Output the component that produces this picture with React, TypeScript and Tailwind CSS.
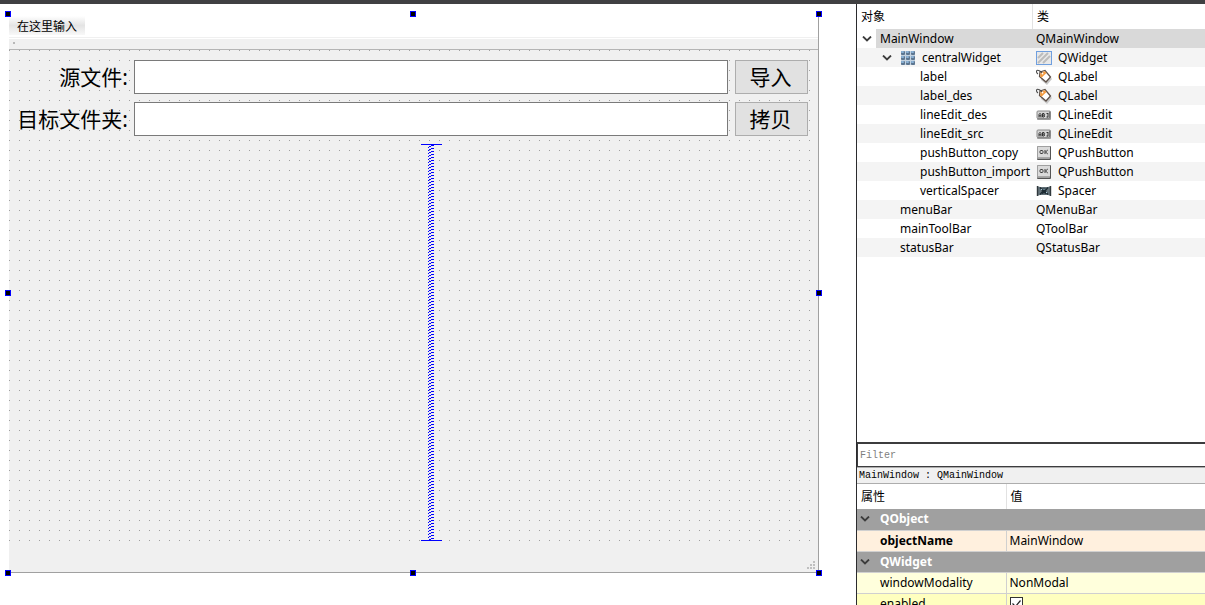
import type { ReactNode } from 'react';
import clsx from 'clsx';

const UI_FONT = "font-['Noto_Sans','Noto_Sans_CJK_SC',sans-serif]";
const MONO_FONT = "font-['Liberation_Mono','Noto_Sans_CJK_SC',monospace]";

type IconName = 'widget' | 'label' | 'lineEdit' | 'button' | 'spacer';

type TreeRow = {
  name: string;
  cls: string;
  depth: 0 | 1 | 2;
  icon?: IconName;
  expanded?: boolean;
  layout?: boolean;
};

const treeRows: TreeRow[] = [
  { name: 'MainWindow', cls: 'QMainWindow', depth: 0, expanded: true },
  { name: 'centralWidget', cls: 'QWidget', depth: 1, icon: 'widget', expanded: true, layout: true },
  { name: 'label', cls: 'QLabel', depth: 2, icon: 'label' },
  { name: 'label_des', cls: 'QLabel', depth: 2, icon: 'label' },
  { name: 'lineEdit_des', cls: 'QLineEdit', depth: 2, icon: 'lineEdit' },
  { name: 'lineEdit_src', cls: 'QLineEdit', depth: 2, icon: 'lineEdit' },
  { name: 'pushButton_copy', cls: 'QPushButton', depth: 2, icon: 'button' },
  { name: 'pushButton_import', cls: 'QPushButton', depth: 2, icon: 'button' },
  { name: 'verticalSpacer', cls: 'Spacer', depth: 2, icon: 'spacer' },
  { name: 'menuBar', cls: 'QMenuBar', depth: 1 },
  { name: 'mainToolBar', cls: 'QToolBar', depth: 1 },
  { name: 'statusBar', cls: 'QStatusBar', depth: 1 },
];

function Chevron() {
  return (
    <svg width="10" height="6" viewBox="0 0 10 6" fill="none" className="shrink-0">
      <path d="M1 0.500l4 4 4-4" stroke="#3c3c3c" strokeWidth="1.8" />
    </svg>
  );
}

function GridIcon() {
  return (
    <svg width="16" height="16" viewBox="0 0 16 16" className="shrink-0">
      <rect x="1" y="1" width="14" height="14" fill="#c3d2e0" />
      {[1, 6, 11].map((y) =>
        [1, 6, 11].map((x) => (
          <g key={`${x}-${y}`}>
            <rect x={x} y={y} width="4" height="4" rx="1" fill="#5d7690" />
            <rect x={x} y={y} width="3" height="2" rx="1" fill="#8db4d8" />
          </g>
        ))
      )}
    </svg>
  );
}

function ClassIcon({ name }: { name: IconName }) {
  return (
    <svg width="16" height="16" viewBox="0 0 16 16" className="shrink-0">
      {name === 'widget' && (
        <>
          <rect x="0.5" y="1.5" width="15" height="13" fill="#e8e8e8" stroke="#6f9fdf" />
          <path d="M2 8l5-5M2 13L12 3M7 13l7-7" stroke="#bcbcbc" strokeWidth="2" />
        </>
      )}
      {name === 'label' && (
        <>
          <path d="M6 4h5l5 6-5 6-6-5z" fill="#c8c8c8" />
          <path d="M4 3l5-1.500 5.500 6.500-4.500 5L3.500 7.500z" fill="#fff" stroke="#5e5048" strokeWidth="1.300" />
          <path d="M4.500 3.500L9 2.200 10.500 4 5.500 8.800 4 7.300z" fill="#f39a3e" />
          <circle cx="6.500" cy="4.500" r="0.900" fill="#fff" />
          <path d="M6 4C4.500 2 2 0.800 1 1.500S0.500 4 2 5" fill="none" stroke="#4c4c4c" strokeWidth="1.100" />
        </>
      )}
      {name === 'lineEdit' && (
        <>
          <rect x="1" y="5" width="14" height="8" rx="1" fill="#9a9a9a" />
          <rect x="1" y="4" width="13.500" height="7.500" rx="1" fill="#d4d4d4" stroke="#8a8a8a" />
          <path
            d="M3 10.500V7.500l1-1.200 1 1.200v3M3 8.800h2M6.500 10V6.500H8l.6.700-.6.900H6.500M8 8.100l.7.900-.7 1H6.500M12 6v4.500M10.500 10h1.500M10.500 6.500h1.500"
            fill="none"
            stroke="#333"
            strokeWidth="1"
          />
          <path d="M13.500 4.500v6.500" stroke="#777" />
        </>
      )}
      {name === 'button' && (
        <>
          <rect x="1" y="1" width="14" height="14" rx="1" fill="#555" />
          <rect x="1" y="1" width="13" height="12.500" rx="1" fill="#dadada" />
          <path d="M1 12h13v1.500H1z" fill="#a8a8a8" />
          <path d="M1.500 13V1.500H14" fill="none" stroke="#a0a0a0" />
          <rect x="4" y="5.500" width="3" height="3" rx="1" fill="none" stroke="#3c3c3c" />
          <path d="M9 5v4M11.800 5L9.500 7l2.300 2" fill="none" stroke="#3c3c3c" />
        </>
      )}
      {name === 'spacer' && (
        <>
          <path d="M1 3l3 1h8l3-1v10l-3-1H4l-3 1z" fill="#66747b" />
          <path d="M1.500 3v10M14.500 3v10" stroke="#30383c" strokeWidth="1.400" />
          <path d="M4 4.500L7 8l-3 3.500M12 4.500L9 8l3 3.500M7 5l2.500 6M9 5l-2.500 6" fill="none" stroke="#1d2b33" strokeWidth="1.300" />
          <path d="M5 6l1 1M11 9l-1 1M8 5.500v1.500" stroke="#a9cbdc" />
        </>
      )}
    </svg>
  );
}

/* Selection handle on the edge of the form */
function Handle({ className }: { className: string }) {
  return <span className={clsx('absolute size-1.5 border border-[#0000ff] bg-black', className)} />;
}

function VerticalSpacer() {
  return (
    <div className="mr-[7px] flex w-[21px] flex-col items-center justify-self-center border-y border-[#0000ff]">
      <svg width="7" height="100%" className="min-h-0 flex-1">
        <defs>
          <pattern id="hatch" width="7" height="3" patternUnits="userSpaceOnUse">
            <path d="M3 0h3v1H3zM1 1h2v1H1zM0 2h1v1H0z" fill="#0000ff" shapeRendering="crispEdges" />
          </pattern>
        </defs>
        <rect width="7" height="100%" fill="url(#hatch)" />
      </svg>
    </div>
  );
}

function FormRow({ id, label, button }: { id: string; label: string; button: string }) {
  return (
    <>
      <label htmlFor={id} className="self-center justify-self-end pr-1.5 whitespace-nowrap">
        {label}
      </label>
      <input id={id} type="text" className="mr-[7px] h-[34px] min-w-0 border border-[#7a7a7a] bg-white px-1 outline-none" />
      <button type="button" className="h-[34px] border border-[#adadad] bg-[#e1e1e1] pr-0.5">
        {button}
      </button>
    </>
  );
}

function FormCanvas() {
  return (
    <main className="min-w-0 flex-1 pt-[10px] pr-[37px] pb-8 pl-[9px]">
      <div className="relative flex h-full flex-col border-r border-b border-[#a0a0a0] bg-[#f0f0f0]">
        <div className="h-6 border-b border-[#f0f0f0] bg-white pt-0.5">
          <button type="button" className="block h-[19px] bg-linear-to-b from-white via-[#e4e4e4] to-[#f8f8f8] px-2 text-xs leading-[21px]">
            在这里输入
          </button>
        </div>
        <div className="h-3 border-t border-b border-t-white border-b-[#b4b4b4] pt-[3px] pl-1">
          <div className="size-0.5 bg-[#b8b8b8]" />
        </div>
        <div className="grid min-h-0 flex-1 grid-cols-[115px_1fr_73px] grid-rows-[34px_34px_1fr] gap-y-2 bg-[conic-gradient(at_1px_1px,transparent_270deg,#a0a0a0_270deg)] bg-[length:10px_10px] pt-[10px] pr-[10px] pb-[9px] pl-[10px] text-[21px] leading-none">
          <FormRow id="lineEdit_src" label="源文件:" button="导入" />
          <FormRow id="lineEdit_des" label="目标文件夹:" button="拷贝" />
          <div />
          <VerticalSpacer />
        </div>
        <div className="flex h-[22px] shrink-0 items-end justify-end p-0.5">
          <svg width="9" height="9" viewBox="0 0 9 9" className="text-[#bfbfbf]">
            <path d="M6 0h2v2H6zM3 3h2v2H3zM6 3h2v2H6zM0 6h2v2H0zM3 6h2v2H3zM6 6h2v2H6z" fill="currentColor" />
          </svg>
        </div>

        <Handle className="-top-[3px] -left-1" />
        <Handle className="-top-[3px] left-1/2 -ml-1" />
        <Handle className="-top-[3px] -right-1" />
        <Handle className="top-1/2 -left-1 -mt-[3px]" />
        <Handle className="top-1/2 -right-1 -mt-[3px]" />
        <Handle className="-bottom-1 -left-1" />
        <Handle className="-bottom-1 left-1/2 -ml-1" />
        <Handle className="-right-1 -bottom-1" />
      </div>
    </main>
  );
}

function ObjectTree() {
  return (
    <div className="min-h-0 flex-1 overflow-hidden bg-white">
      <table className="w-full table-fixed border-collapse text-left">
        <colgroup>
          <col className="w-[176px]" />
          <col />
        </colgroup>
        <thead>
          <tr className="h-[25px]">
            <th className="p-0 pl-1 font-normal">对象</th>
            <th className="p-0 font-normal">
              <div className="-ml-px flex h-[25px] items-center border-l border-[#e2e2e2] pl-1">类</div>
            </th>
          </tr>
        </thead>
        <tbody>
          {treeRows.map((row, i) => (
            <tr key={row.name} className={i % 2 ? 'bg-[#f4f4f4]' : 'bg-white'}>
              <td className="p-0">
                <div className={clsx('flex h-[19px] items-center', row.depth === 1 && row.expanded && 'pl-5')}>
                  {row.expanded && (
                    <span className="flex w-5 shrink-0 justify-center pr-px">
                      <Chevron />
                    </span>
                  )}
                  <span
                    className={clsx(
                      'flex h-full flex-1 items-center gap-1.5 whitespace-nowrap',
                      row.depth === 0 && '-ml-px bg-[#d9d9d9] pl-1',
                      row.depth === 1 && row.expanded && 'pl-[3px]',
                      row.depth === 1 && !row.expanded && 'pl-[43px]',
                      row.depth === 2 && 'pl-[63px]'
                    )}
                  >
                    {row.layout && <GridIcon />}
                    {row.name}
                  </span>
                </div>
              </td>
              <td className={clsx('p-0', row.depth === 0 && 'bg-[#d9d9d9]')}>
                <div className="flex h-[19px] items-center gap-1.5 pl-[3px]">
                  {row.icon && <ClassIcon name={row.icon} />}
                  {row.cls}
                </div>
              </td>
            </tr>
          ))}
        </tbody>
      </table>
    </div>
  );
}

function GroupRow({ children }: { children: ReactNode }) {
  return (
    <tr className="h-[21px] border-b border-[#d0d0d0] bg-[#a0a0a0] font-bold text-white">
      <th colSpan={2} className="p-0">
        <div className="flex h-5 items-center gap-2.5 pl-[3px]">
          <Chevron />
          {children}
        </div>
      </th>
    </tr>
  );
}

function PropertyRow({ name, bg, bold, children }: { name: string; bg: string; bold?: boolean; children: ReactNode }) {
  return (
    <tr className={clsx('h-[21px] border-b border-[#d0d0d0]', bg)}>
      <td className={clsx('border-r border-[#d0d0d0] p-0 pl-[23px]', bold && 'font-bold')}>{name}</td>
      <td className="p-0 pl-[3px]">{children}</td>
    </tr>
  );
}

function PropertyEditor() {
  return (
    <div className="h-[121px] shrink-0 overflow-hidden bg-white">
      <table className="w-full table-fixed border-collapse text-left">
        <colgroup>
          <col className="w-[149px]" />
          <col />
        </colgroup>
        <thead>
          <tr className="h-[25px]">
            <th className="border-r border-[#e2e2e2] p-0 pl-1 font-normal">属性</th>
            <th className="p-0 pl-1 font-normal">值</th>
          </tr>
        </thead>
        <tbody>
          <GroupRow>QObject</GroupRow>
          <PropertyRow name="objectName" bg="bg-[#fff0de]" bold>
            MainWindow
          </PropertyRow>
          <GroupRow>QWidget</GroupRow>
          <PropertyRow name="windowModality" bg="bg-[#ffffdc]">
            NonModal
          </PropertyRow>
          <PropertyRow name="enabled" bg="bg-[#ffffbf]">
            <span className="relative block size-[13px]">
              <input type="checkbox" defaultChecked aria-label="enabled" className="peer block size-[13px] appearance-none border border-[#333] bg-white" />
              <svg viewBox="0 0 13 13" className="pointer-events-none absolute inset-0 hidden size-[13px] peer-checked:block">
                <path d="M2.500 6.500l3 3 5-6" fill="none" stroke="#222" strokeWidth="1.200" />
              </svg>
            </span>
          </PropertyRow>
        </tbody>
      </table>
    </div>
  );
}

export default function App() {
  return (
    <div className={clsx('flex h-screen flex-col overflow-hidden bg-white text-black', UI_FONT)}>
      <div className="h-1 shrink-0 bg-[#404042]" />
      <div className="flex min-h-0 flex-1">
        <FormCanvas />
        <aside className="flex w-[349px] shrink-0 flex-col border-l border-[#2b2b2e] text-xs leading-4">
          <ObjectTree />
          <input
            type="text"
            placeholder="Filter"
            aria-label="Filter"
            className={clsx('h-[25px] shrink-0 border-t-2 border-b border-l border-[#3c3c3e] bg-white pl-0.5 text-[10px] outline-none placeholder:text-[#808080]', MONO_FONT)}
          />
          <div className={clsx('h-[17px] shrink-0 border-y border-[#adadad] bg-[#f0f0f0] pl-0.5 text-[10px] leading-4', MONO_FONT)}>
            MainWindow : QMainWindow
          </div>
          <PropertyEditor />
        </aside>
      </div>
    </div>
  );
}
